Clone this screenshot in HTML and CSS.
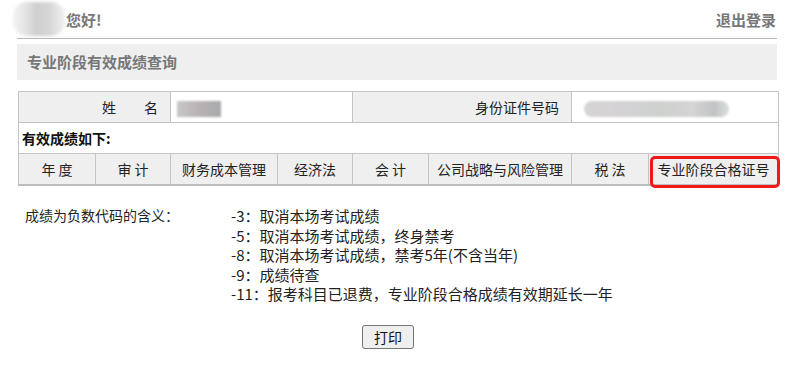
FILE: index.html
```html
<!DOCTYPE html>
<html lang="zh-CN">
<head>
    <meta charset="UTF-8">
    <title>专业阶段有效成绩查询</title>
    <link rel="stylesheet" href="styles.css">
</head>
<body>
    <div class="page">
        <div class="top-bar">
            <div class="greet">
                <span class="blur-name"></span>
                <span>您好!</span>
            </div>
            <a class="logout" href="#">退出登录</a>
        </div>

        <div class="title-bar">专业阶段有效成绩查询</div>

        <div class="score-box">
            <table class="score-table">
                <colgroup>
                    <col style="width:77px"><col style="width:75px"><col style="width:107px"><col style="width:75px">
                    <col style="width:76px"><col style="width:143px"><col style="width:77px"><col style="width:130px">
                </colgroup>
                <tr class="info-row">
                    <td colspan="2" class="label">姓　　名</td>
                    <td colspan="2" class="value"><span class="blur blur-short"></span></td>
                    <td colspan="2" class="label">身份证件号码</td>
                    <td colspan="2" class="value"><span class="blur blur-long"></span></td>
                </tr>
                <tr>
                    <td colspan="8" class="caption">有效成绩如下:</td>
                </tr>
                <tr class="head-row">
                    <th>年 度</th>
                    <th>审 计</th>
                    <th>财务成本管理</th>
                    <th>经济法</th>
                    <th>会 计</th>
                    <th>公司战略与风险管理</th>
                    <th>税 法</th>
                    <th>专业阶段合格证号</th>
                </tr>
            </table>
            <div class="mark"></div>
        </div>

        <div class="notes">
            <div class="notes-title">成绩为负数代码的含义：</div>
            <div class="notes-list">
                <div>-3：取消本场考试成绩</div>
                <div>-5：取消本场考试成绩，终身禁考</div>
                <div>-8：取消本场考试成绩，禁考5年(不含当年)</div>
                <div>-9：成绩待查</div>
                <div>-11：报考科目已退费，专业阶段合格成绩有效期延长一年</div>
            </div>
        </div>

        <div class="actions">
            <button type="button" onclick="window.print()">打印</button>
        </div>
    </div>
</body>
</html>
```

FILE: styles.css
```css
body {
    margin: 0;
    font-family: "Microsoft YaHei", "Noto Sans CJK SC", sans-serif;
    font-size: 14px;
    color: #222;
    background: #fff;
}
.page {
    padding: 0 15px 0 17px;
}
.top-bar {
    height: 38px;
    display: flex;
    align-items: center;
    justify-content: space-between;
    border-bottom: 1px solid #b8b8b8;
    font-size: 15px;
    font-weight: bold;
    color: #777;
}
.greet {
    display: flex;
    align-items: center;
    gap: 1px;
    margin-left: -4px;
}
.blur-name {
    display: inline-block;
    width: 52px;
    height: 34px;
    border-radius: 14px;
    background: linear-gradient(90deg, #f4f4f4 0, #e6e6e6 20%, #cfcfcf 45%, #d6d6d6 70%, #f2f2f2 100%);
    filter: blur(1.5px);
}
.logout {
    color: #777;
    text-decoration: none;
    margin-right: 1px;
}
.title-bar {
    margin-top: 5px;
    height: 36px;
    line-height: 36px;
    padding-left: 10px;
    background: #efefef;
    font-size: 15px;
    font-weight: bold;
    color: #777;
}
.score-box {
    position: relative;
    margin-top: 11px;
    margin-left: 1px;
}
.score-table {
    width: 760px;
    table-layout: fixed;
    border-collapse: collapse;
    border: 1px solid #bdbdbd;
    border-bottom: 2px solid #bdbdbd;
}
.score-table td,
.score-table th {
    border: 1px solid #c4c4c4;
    height: 30px;
    padding: 0;
    font-weight: normal;
    white-space: nowrap;
}
.info-row .label {
    background: #efefef;
    text-align: right;
    padding-right: 12px;
}
.info-row .value {
    background: #fff;
    padding-left: 6px;
}
.blur {
    display: inline-block;
    height: 16px;
    vertical-align: middle;
    filter: blur(1px);
}
.blur-short {
    width: 44px;
    background: linear-gradient(90deg, #c8c8c8 0, #b9b2b2 50%, #a9a9ad 100%);
}
.blur-long {
    width: 145px;
    margin-left: 6px;
    border-radius: 8px;
    background: linear-gradient(90deg, #d8d4d4 0, #d4d2d6 30%, #ccd2cc 50%, #d6d3d4 75%, #c0c4c4 90%, #dde0e0 100%);
}
.score-table .caption {
    font-weight: bold;
    padding-left: 3px;
    color: #111;
}
.head-row th {
    background: #efefef;
    text-align: center;
}
.mark {
    position: absolute;
    left: 632px;
    top: 65px;
    width: 124px;
    height: 26px;
    border: 3px solid #f01818;
    border-radius: 5px;
}
.notes {
    display: flex;
    margin-top: 20px;
    line-height: 19.5px;
}
.notes-title {
    width: 206px;
    padding-left: 8px;
}
.notes-list {
    font-size: 15px;
}
.actions {
    margin-top: 21px;
    padding-left: 345px;
}
.actions button {
    width: 52px;
    height: 24px;
    padding: 0;
    font-family: inherit;
    font-size: 14px;
    color: #111;
    background: #efefef;
    border: 1px solid #767676;
    border-radius: 3px;
}
```
